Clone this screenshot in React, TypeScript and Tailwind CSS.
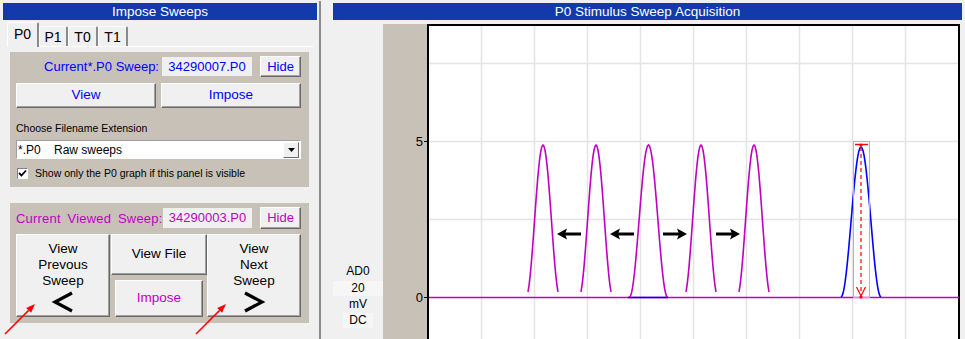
import React from "react";

const BTN =
  "bg-[#f0f0f0] border border-t-white border-l-white border-b-[#696969] border-r-[#696969] shadow-[inset_-1px_-1px_0_#a0a0a0] flex items-center justify-center";

function pulse(c: number, base: number, amp: number, w: number, half: number) {
  const pts: string[] = [];
  for (let t = -half; t <= half; t += 1) {
    const y = base - amp * 0.5 * (1 + Math.cos((Math.PI * t) / w));
    pts.push(`${c + t},${y.toFixed(1)}`);
  }
  return pts.join(" ");
}

function Tab({ label, active, w }: { label: string; active?: boolean; w: string }) {
  if (active) {
    return (
      <div className={`relative z-10 -mb-[1px] h-[25px] ${w} bg-[#f0f0f0] border-t border-l border-t-white border-l-white border-r-2 border-r-[#8a8a8a] rounded-t-[2px] flex items-center justify-center text-[14px] leading-none pb-[2px]`}>
        {label}
      </div>
    );
  }
  return (
    <div className={`h-[20px] ${w} bg-[#f0f0f0] border-t border-l border-t-white border-l-white border-r-2 border-r-[#8a8a8a] rounded-t-[2px] flex items-center justify-center text-[14px] leading-none`}>
      {label}
    </div>
  );
}

function Chart() {
  const base = 273;
  const mCenters = [160, 213, 265.5, 318, 371];
  const vGrid = Array.from({ length: 9 }, (_, i) => 45.5 + 53 * (i + 1));
  const hGrid = [39.5, 117.5, 195.5];
  return (
    <svg width="578" height="315" viewBox="0 0 578 315" className="block shrink-0">
      <rect x="0" y="0" width="45" height="315" fill="#c8c1b8" />
      <rect x="45" y="0" width="532" height="315" fill="#ffffff" />
      {vGrid.map((x) => (
        <line key={x} x1={x} y1="2" x2={x} y2="315" stroke="#e4e4e4" strokeWidth="1.5" />
      ))}
      {hGrid.map((y) => (
        <line key={y} x1="46" y1={y} x2="576" y2={y} stroke="#e4e4e4" strokeWidth="1.5" />
      ))}
      <line x1="44" y1="1" x2="577" y2="1" stroke="#000" strokeWidth="2" />
      <line x1="45" y1="0" x2="45" y2="315" stroke="#000" strokeWidth="2" />
      <line x1="576" y1="0" x2="576" y2="315" stroke="#000" strokeWidth="2" />
      <line x1="41" y1="117.5" x2="45" y2="117.5" stroke="#000" strokeWidth="1" />
      <line x1="41" y1="273.5" x2="45" y2="273.5" stroke="#000" strokeWidth="1" />
      <text x="40" y="122" textAnchor="end" fontSize="13" fontFamily="Liberation Sans, Arial, sans-serif" fill="#000">
        5
      </text>
      <text x="40" y="278" textAnchor="end" fontSize="13" fontFamily="Liberation Sans, Arial, sans-serif" fill="#000">
        0
      </text>
      <line x1="46" y1="273.5" x2="576" y2="273.5" stroke="#c000c0" strokeWidth="1.5" />
      <line x1="245" y1="273.5" x2="285" y2="273.5" stroke="#0000ff" strokeWidth="1.5" />
      {mCenters.map((c, i) => (
        <polyline
          key={c}
          points={pulse(c, base, 152, i === 2 ? 19 : 17, i === 2 ? 19 : 15)}
          fill="none"
          stroke="#c000c0"
          strokeWidth="1.6"
        />
      ))}
      <polyline points={pulse(478, base, 150, 20, 20)} fill="none" stroke="#0000ff" strokeWidth="1.6" />
      <rect x="470.5" y="117.5" width="16" height="156" fill="none" stroke="#b4b4b4" strokeWidth="1" />
      <line x1="472" y1="120.5" x2="485" y2="120.5" stroke="#ff0000" strokeWidth="1.5" />
      <circle cx="478" cy="121" r="1.6" fill="#ff0000" />
      <line x1="478" y1="123" x2="478" y2="271" stroke="#ff0000" strokeWidth="1.2" strokeDasharray="4 3" />
      <polyline points="473.5,263 478,272 482.5,263" fill="none" stroke="#ff0000" strokeWidth="1.2" />
      <circle cx="478" cy="273" r="1.6" fill="#ff0000" />
      {[174, 227].map((x) => (
        <g key={x}>
          <line x1={x + 6} y1="210" x2={x + 24} y2="210" stroke="#000" strokeWidth="3" />
          <polygon points={`${x},210 ${x + 10},204.5 ${x + 8},210 ${x + 10},215.5`} fill="#000" />
        </g>
      ))}
      {[304, 357].map((x) => (
        <g key={x}>
          <line x1={x - 24} y1="210" x2={x - 6} y2="210" stroke="#000" strokeWidth="3" />
          <polygon points={`${x},210 ${x - 10},204.5 ${x - 8},210 ${x - 10},215.5`} fill="#000" />
        </g>
      ))}
    </svg>
  );
}

export default function App() {
  return (
    <div className="relative w-[965px] h-[339px] overflow-hidden bg-[#f0f0f0] flex font-['Liberation_Sans',Arial,sans-serif] text-black">
      {/* LEFT PANEL */}
      <div className="w-[319px] shrink-0 flex flex-col">
        <div className="mt-[3px] ml-[3px] w-[314px] h-[17px] bg-[#123aab] text-white text-[13.5px] leading-[17px] text-center">
          Impose Sweeps
        </div>
        <div className="mt-[3px] ml-[7px] flex items-end h-[23px]">
          <Tab label="P0" active w="w-[32px]" />
          <Tab label="P1" w="w-[29px]" />
          <Tab label="T0" w="w-[30px]" />
          <Tab label="T1" w="w-[30px]" />
        </div>
        <div className="ml-[7px] w-[306px] h-[1px] bg-white" />

        {/* Group 1 */}
        <div className="mt-[5px] ml-[10px] w-[299px] h-[135px] bg-[#c8c1b8] px-[6px] flex flex-col">
          <div className="mt-[4px] flex items-center h-[21px]">
            <div className="w-[143px] text-right text-[13px] text-[#0000ff] leading-none">Current*.P0 Sweep:</div>
            <div className="ml-[3px] w-[90px] h-[19px] bg-[#f0f0f0] text-[13px] text-[#0000ff] leading-[19px] text-center">
              34290007.P0
            </div>
            <div className={`ml-[8px] w-[41px] h-[21px] text-[13px] text-[#0000ff] ${BTN}`}>Hide</div>
          </div>
          <div className="mt-[6px] flex gap-[5px]">
            <div className={`w-[140px] h-[25px] text-[13.5px] text-[#0000ff] ${BTN}`}>View</div>
            <div className={`w-[140px] h-[25px] text-[13.5px] text-[#0000ff] ${BTN}`}>Impose</div>
          </div>
          <div className="mt-[14px] text-[10.5px] leading-[13px]">Choose Filename Extension</div>
          <div className="mt-[5px] w-[285px] h-[19px] bg-white border border-t-[#a0a0a0] border-l-[#a0a0a0] border-b-white border-r-white flex items-center">
            <div className="flex-1 text-[12px] leading-none whitespace-pre pl-[1px]">{"*.P0    Raw sweeps"}</div>
            <div className="w-[16px] h-[16px] mr-[1px] bg-[#f0f0f0] border border-t-white border-l-white border-b-[#696969] border-r-[#696969] flex items-center justify-center">
              <svg width="7" height="4" viewBox="0 0 7 4">
                <polygon points="0,0 7,0 3.5,4" fill="#000" />
              </svg>
            </div>
          </div>
          <div className="mt-[8px] flex items-center h-[13px]">
            <div className="ml-[1px] w-[11px] h-[11px] bg-white border border-t-[#808080] border-l-[#808080] border-b-white border-r-white flex items-center justify-center">
              <svg width="9" height="9" viewBox="0 0 9 9">
                <polyline points="1,4 3.5,6.5 8,1.5" fill="none" stroke="#000" strokeWidth="1.8" />
              </svg>
            </div>
            <div className="ml-[7px] text-[10.5px] leading-none">Show only the P0 graph if this panel is visible</div>
          </div>
        </div>

        {/* Group 2 */}
        <div className="mt-[16px] ml-[10px] w-[299px] h-[120px] bg-[#c8c1b8] px-[6px] flex flex-col">
          <div className="mt-[4px] flex items-center h-[22px]">
            <div className="w-[147px] text-[13px] text-[#c000c0] leading-none [word-spacing:3px] tracking-[0.2px]">
              Current Viewed Sweep:
            </div>
            <div className="w-[89px] h-[20px] bg-[#f0f0f0] text-[13px] text-[#c000c0] leading-[20px] text-center">
              34290003.P0
            </div>
            <div className={`ml-[8px] w-[41px] h-[22px] text-[13px] text-[#c000c0] ${BTN}`}>Hide</div>
          </div>
          <div className="mt-[5px] flex">
            <div className={`w-[94px] h-[83px] !flex-col !justify-start pt-[6px] text-[13.5px] leading-[16px] text-center ${BTN}`}>
              <div>View</div>
              <div>Prevous</div>
              <div>Sweep</div>
              <svg width="24" height="22" viewBox="0 0 24 22" className="mt-[2px]">
                <polyline points="21,2 4,11 21,20" fill="none" stroke="#000" strokeWidth="3.2" />
              </svg>
            </div>
            <div className="ml-[1px] w-[96px] flex flex-col items-center">
              <div className={`w-[96px] h-[41px] text-[13.5px] ${BTN}`}>View File</div>
              <div className={`mt-[5px] w-[88px] h-[37px] text-[13.5px] text-[#c000c0] ${BTN}`}>Impose</div>
            </div>
            <div className={`w-[94px] h-[83px] !flex-col !justify-start pt-[6px] text-[13.5px] leading-[16px] text-center ${BTN}`}>
              <div>View</div>
              <div>Next</div>
              <div>Sweep</div>
              <svg width="24" height="22" viewBox="0 0 24 22" className="mt-[2px]">
                <polyline points="3,2 20,11 3,20" fill="none" stroke="#000" strokeWidth="3.2" />
              </svg>
            </div>
          </div>
        </div>
      </div>

      {/* separator */}
      <div className="mt-[1px] w-[2px] shrink-0 bg-[#8a8a8a]" />

      {/* RIGHT PANEL */}
      <div className="flex-1 flex flex-col">
        <div className="mt-[3px] ml-[12px] w-[629px] h-[17px] bg-[#123aab] text-white text-[13.5px] leading-[17px] text-center">
          P0 Stimulus Sweep Acquisition
        </div>
        <div className="mt-[4px] flex">
          <div className="ml-[12px] w-[50px] flex flex-col items-center pt-[240px] text-[12px]">
            <div className="leading-[14px]">AD0</div>
            <div className="mt-[3px] w-[50px] h-[15px] bg-[#f6f6f6] leading-[15px] text-center">20</div>
            <div className="mt-[1px] leading-[14px]">mV</div>
            <div className="mt-[2px] w-[30px] h-[15px] bg-[#f6f6f6] leading-[15px] text-center">DC</div>
          </div>
          <Chart />
        </div>
      </div>

      {/* red annotation arrows */}
      <svg className="absolute left-0 top-0 pointer-events-none" width="965" height="339" viewBox="0 0 965 339">
        {[
          [5, 334, 35, 304],
          [196, 334, 226, 304],
        ].map(([x1, y1, x2, y2]) => {
          const dx = x2 - x1;
          const dy = y2 - y1;
          const len = Math.hypot(dx, dy);
          const ux = dx / len;
          const uy = dy / len;
          const bx = x2 - ux * 9;
          const by = y2 - uy * 9;
          const px = -uy * 3.5;
          const py = ux * 3.5;
          return (
            <g key={x1}>
              <line x1={x1} y1={y1} x2={bx} y2={by} stroke="#ff0000" strokeWidth="1.5" />
              <polygon points={`${x2},${y2} ${bx + px},${by + py} ${bx - px},${by - py}`} fill="#ff0000" />
            </g>
          );
        })}
      </svg>
    </div>
  );
}
